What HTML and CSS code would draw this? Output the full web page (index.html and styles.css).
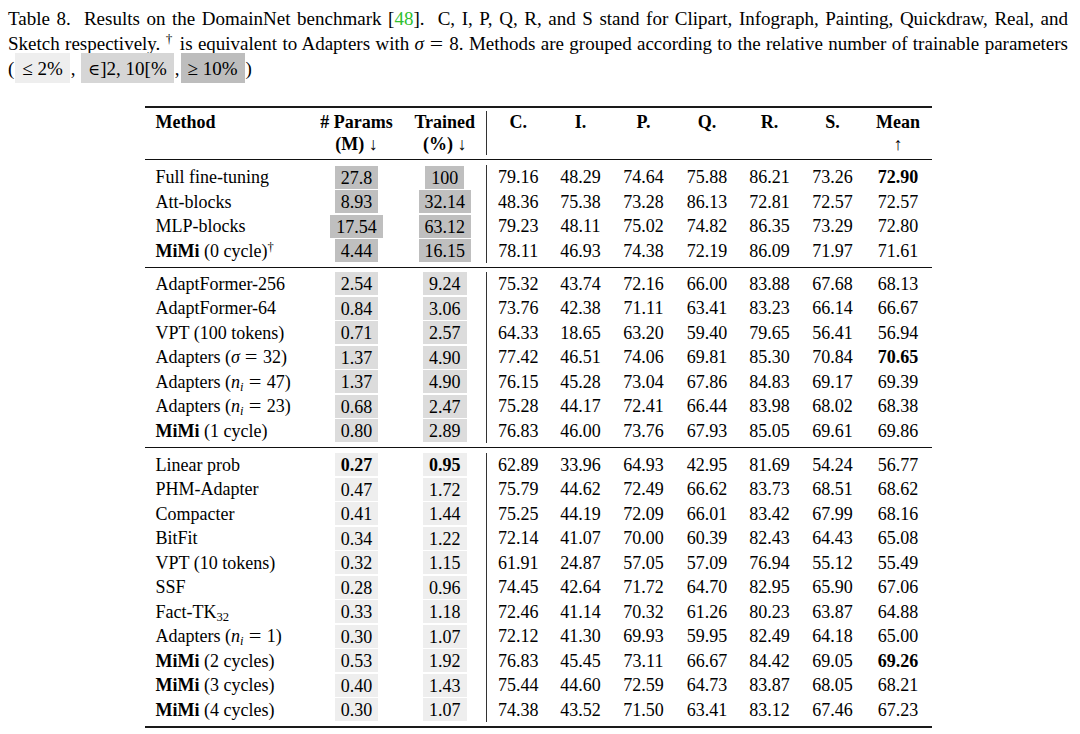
FILE: index.html
```html
<!DOCTYPE html>
<html>
<head>
<meta charset="utf-8">
<link rel="stylesheet" href="styles.css">
</head>
<body>
<div class="page">
  <div class="caption">
    <p class="ln">Table 8.&nbsp; Results on the DomainNet benchmark [<span class="cite">48</span>].&nbsp; C, I, P, Q, R, and S stand for Clipart, Infograph, Painting, Quickdraw, Real, and</p>
    <p class="ln">Sketch respectively. <span class="sup">†</span> is equivalent to Adapters with <i>σ</i> <span class="eq">=</span> 8. Methods are grouped according to the relative number of trainable parameters</p>
    <p class="ln last">(<span class="bx l"><span class="sym">≤</span> 2%</span>, <span class="bx m"><span class="sym in">∈</span>]2, 10[%</span>,<span class="bx d"><span class="sym">≥</span> 10%</span>)</p>
  </div>

  <table class="results">
    <colgroup>
      <col class="c-method"><col class="c-params"><col class="c-trained">
      <col class="c-c"><col class="c-i"><col class="c-p"><col class="c-q"><col class="c-r"><col class="c-s"><col class="c-mean">
    </colgroup>
    <thead>
      <tr class="sp sp-h1"><td colspan="10"></td></tr>
      <tr class="hr">
        <th class="name">Method</th><th># Params</th><th>Trained</th>
        <th class="vl">C.</th><th>I.</th><th>P.</th><th>Q.</th><th>R.</th><th>S.</th><th>Mean</th>
      </tr>
      <tr class="hr">
        <th class="name"></th><th>(M) <span class="arr">↓</span></th><th>(%) <span class="arr">↓</span></th>
        <th class="vl"></th><th></th><th></th><th></th><th></th><th></th><th><span class="arr">↑</span></th>
      </tr>
      <tr class="sp sp-h2"><td colspan="10"></td></tr>
    </thead>
    <tbody>
      <tr class="sp sp-t"><td colspan="10"></td></tr>
      <tr><td class="name">Full fine-tuning</td><td><span class="hl d">27.8</span></td><td><span class="hl d">100</span></td><td class="vl">79.16</td><td>48.29</td><td>74.64</td><td>75.88</td><td>86.21</td><td>73.26</td><td><b>72.90</b></td></tr>
      <tr><td class="name">Att-blocks</td><td><span class="hl d">8.93</span></td><td><span class="hl d">32.14</span></td><td class="vl">48.36</td><td>75.38</td><td>73.28</td><td>86.13</td><td>72.81</td><td>72.57</td><td>72.57</td></tr>
      <tr><td class="name">MLP-blocks</td><td><span class="hl d">17.54</span></td><td><span class="hl d">63.12</span></td><td class="vl">79.23</td><td>48.11</td><td>75.02</td><td>74.82</td><td>86.35</td><td>73.29</td><td>72.80</td></tr>
      <tr><td class="name"><b>MiMi</b> (0 cycle)<span class="sup">†</span></td><td><span class="hl d">4.44</span></td><td><span class="hl d">16.15</span></td><td class="vl">78.11</td><td>46.93</td><td>74.38</td><td>72.19</td><td>86.09</td><td>71.97</td><td>71.61</td></tr>
      <tr class="sp sp-b"><td colspan="10"></td></tr>
    </tbody>
    <tbody>
      <tr class="sp sp-t2"><td colspan="10"></td></tr>
      <tr><td class="name">AdaptFormer-256</td><td><span class="hl m">2.54</span></td><td><span class="hl m">9.24</span></td><td class="vl">75.32</td><td>43.74</td><td>72.16</td><td>66.00</td><td>83.88</td><td>67.68</td><td>68.13</td></tr>
      <tr><td class="name">AdaptFormer-64</td><td><span class="hl m">0.84</span></td><td><span class="hl m">3.06</span></td><td class="vl">73.76</td><td>42.38</td><td>71.11</td><td>63.41</td><td>83.23</td><td>66.14</td><td>66.67</td></tr>
      <tr><td class="name">VPT (100 tokens)</td><td><span class="hl m">0.71</span></td><td><span class="hl m">2.57</span></td><td class="vl">64.33</td><td>18.65</td><td>63.20</td><td>59.40</td><td>79.65</td><td>56.41</td><td>56.94</td></tr>
      <tr><td class="name">Adapters (<i>σ</i> <span class="eq">=</span> 32)</td><td><span class="hl m">1.37</span></td><td><span class="hl m">4.90</span></td><td class="vl">77.42</td><td>46.51</td><td>74.06</td><td>69.81</td><td>85.30</td><td>70.84</td><td><b>70.65</b></td></tr>
      <tr><td class="name">Adapters (<i>n</i><span class="sub"><i>i</i></span> <span class="eq">=</span> 47)</td><td><span class="hl m">1.37</span></td><td><span class="hl m">4.90</span></td><td class="vl">76.15</td><td>45.28</td><td>73.04</td><td>67.86</td><td>84.83</td><td>69.17</td><td>69.39</td></tr>
      <tr><td class="name">Adapters (<i>n</i><span class="sub"><i>i</i></span> <span class="eq">=</span> 23)</td><td><span class="hl m">0.68</span></td><td><span class="hl m">2.47</span></td><td class="vl">75.28</td><td>44.17</td><td>72.41</td><td>66.44</td><td>83.98</td><td>68.02</td><td>68.38</td></tr>
      <tr><td class="name"><b>MiMi</b> (1 cycle)</td><td><span class="hl m">0.80</span></td><td><span class="hl m">2.89</span></td><td class="vl">76.83</td><td>46.00</td><td>73.76</td><td>67.93</td><td>85.05</td><td>69.61</td><td>69.86</td></tr>
      <tr class="sp sp-b"><td colspan="10"></td></tr>
    </tbody>
    <tbody>
      <tr class="sp sp-t"><td colspan="10"></td></tr>
      <tr><td class="name">Linear prob</td><td><span class="hl l"><b>0.27</b></span></td><td><span class="hl l"><b>0.95</b></span></td><td class="vl">62.89</td><td>33.96</td><td>64.93</td><td>42.95</td><td>81.69</td><td>54.24</td><td>56.77</td></tr>
      <tr><td class="name">PHM-Adapter</td><td><span class="hl l">0.47</span></td><td><span class="hl l">1.72</span></td><td class="vl">75.79</td><td>44.62</td><td>72.49</td><td>66.62</td><td>83.73</td><td>68.51</td><td>68.62</td></tr>
      <tr><td class="name">Compacter</td><td><span class="hl l">0.41</span></td><td><span class="hl l">1.44</span></td><td class="vl">75.25</td><td>44.19</td><td>72.09</td><td>66.01</td><td>83.42</td><td>67.99</td><td>68.16</td></tr>
      <tr><td class="name">BitFit</td><td><span class="hl l">0.34</span></td><td><span class="hl l">1.22</span></td><td class="vl">72.14</td><td>41.07</td><td>70.00</td><td>60.39</td><td>82.43</td><td>64.43</td><td>65.08</td></tr>
      <tr><td class="name">VPT (10 tokens)</td><td><span class="hl l">0.32</span></td><td><span class="hl l">1.15</span></td><td class="vl">61.91</td><td>24.87</td><td>57.05</td><td>57.09</td><td>76.94</td><td>55.12</td><td>55.49</td></tr>
      <tr><td class="name">SSF</td><td><span class="hl l">0.28</span></td><td><span class="hl l">0.96</span></td><td class="vl">74.45</td><td>42.64</td><td>71.72</td><td>64.70</td><td>82.95</td><td>65.90</td><td>67.06</td></tr>
      <tr><td class="name">Fact-TK<span class="sub">32</span></td><td><span class="hl l">0.33</span></td><td><span class="hl l">1.18</span></td><td class="vl">72.46</td><td>41.14</td><td>70.32</td><td>61.26</td><td>80.23</td><td>63.87</td><td>64.88</td></tr>
      <tr><td class="name">Adapters (<i>n</i><span class="sub"><i>i</i></span> <span class="eq">=</span> 1)</td><td><span class="hl l">0.30</span></td><td><span class="hl l">1.07</span></td><td class="vl">72.12</td><td>41.30</td><td>69.93</td><td>59.95</td><td>82.49</td><td>64.18</td><td>65.00</td></tr>
      <tr><td class="name"><b>MiMi</b> (2 cycles)</td><td><span class="hl l">0.53</span></td><td><span class="hl l">1.92</span></td><td class="vl">76.83</td><td>45.45</td><td>73.11</td><td>66.67</td><td>84.42</td><td>69.05</td><td><b>69.26</b></td></tr>
      <tr><td class="name"><b>MiMi</b> (3 cycles)</td><td><span class="hl l">0.40</span></td><td><span class="hl l">1.43</span></td><td class="vl">75.44</td><td>44.60</td><td>72.59</td><td>64.73</td><td>83.87</td><td>68.05</td><td>68.21</td></tr>
      <tr><td class="name"><b>MiMi</b> (4 cycles)</td><td><span class="hl l">0.30</span></td><td><span class="hl l">1.07</span></td><td class="vl">74.38</td><td>43.52</td><td>71.50</td><td>63.41</td><td>83.12</td><td>67.46</td><td>67.23</td></tr>
      <tr class="sp sp-b"><td colspan="10"></td></tr>
    </tbody>
  </table>
</div>
</body>
</html>
```

FILE: styles.css
```css
html, body {
  margin: 0;
  padding: 0;
  background: #ffffff;
}

body {
  font-family: "Liberation Serif", "Times New Roman", serif;
  font-size: 18px;
  color: #000000;
  width: 1080px;
}

.page {
  padding: 6px 12px 0 8px;
}

/* ---------- caption ---------- */
.caption .ln {
  margin: 0;
  font-size: 19px;
  line-height: 25px;
  height: 25px;
  word-spacing: -1.5px;
  text-align: justify;
  text-align-last: justify;
  white-space: nowrap;
}

.caption .ln.last {
  text-align-last: left;
  text-align: left;
  word-spacing: 0;
}

.cite {
  color: #2fbf2f;
}

.sup {
  font-size: 0.7em;
  line-height: 0;
  vertical-align: 0.5em;
}

.sub {
  font-size: 0.7em;
  line-height: 0;
  vertical-align: -0.25em;
}

.eq {
  display: inline-block;
  margin: 0 2px;
  transform: scaleX(1.25);
}

.sym {
  font-family: "Liberation Serif", "DejaVu Serif", serif;
}

.sym.in {
  font-size: 0.85em;
}

.bx {
  padding: 5px 7px 4px;
  margin: 0 1px;
}

.bx.l { background: #eeeeee; }
.bx.m { background: #d6d6d6; }
.bx.d { background: #bdbdbd; }

/* ---------- table ---------- */
.results {
  margin: 25px auto 0;
  width: 787px;
  table-layout: fixed;
  border-collapse: collapse;
  border-top: 2px solid #1a1a1a;
  border-bottom: 2px solid #1a1a1a;
}

.c-method { width: 165px; }
.c-params { width: 94px; }
.c-trained { width: 83px; }
.c-c { width: 63px; }
.c-i { width: 62px; }
.c-p { width: 64px; }
.c-q { width: 63px; }
.c-r { width: 62px; }
.c-s { width: 64px; }
.c-mean { width: 67px; }

.results thead {
  border-bottom: 1px solid #111111;
}

.results tbody + tbody {
  border-top: 1px solid #111111;
}

.results th,
.results td {
  padding: 0;
  text-align: center;
  white-space: nowrap;
}

.results th {
  font-weight: bold;
  height: 22px;
  line-height: 22px;
}

.results td {
  height: 24.5px;
  line-height: 24.5px;
}

.results .name {
  text-align: left;
  padding-left: 11px;
}

.results .vl {
  border-left: 1px solid #333333;
}

.arr {
  font-family: "Liberation Serif", serif;
  font-weight: normal;
  font-size: 18px;
}

.results tr.sp td {
  height: 4px;
  line-height: 0;
  font-size: 0;
  padding: 0;
}

.results tr.sp-h1 td { height: 3px; }
.results tr.sp-h2 td { height: 4px; }
.results tr.sp-t td { height: 5px; }
.results tr.sp-t2 td { height: 4px; }
.results tr.sp-b td { height: 3.5px; }

.hl {
  padding: 1.5px 6px;
}

.hl.d { background: #bfbfbf; }
.hl.m { background: #dcdcdc; }
.hl.l { background: #eeeeee; }
```
